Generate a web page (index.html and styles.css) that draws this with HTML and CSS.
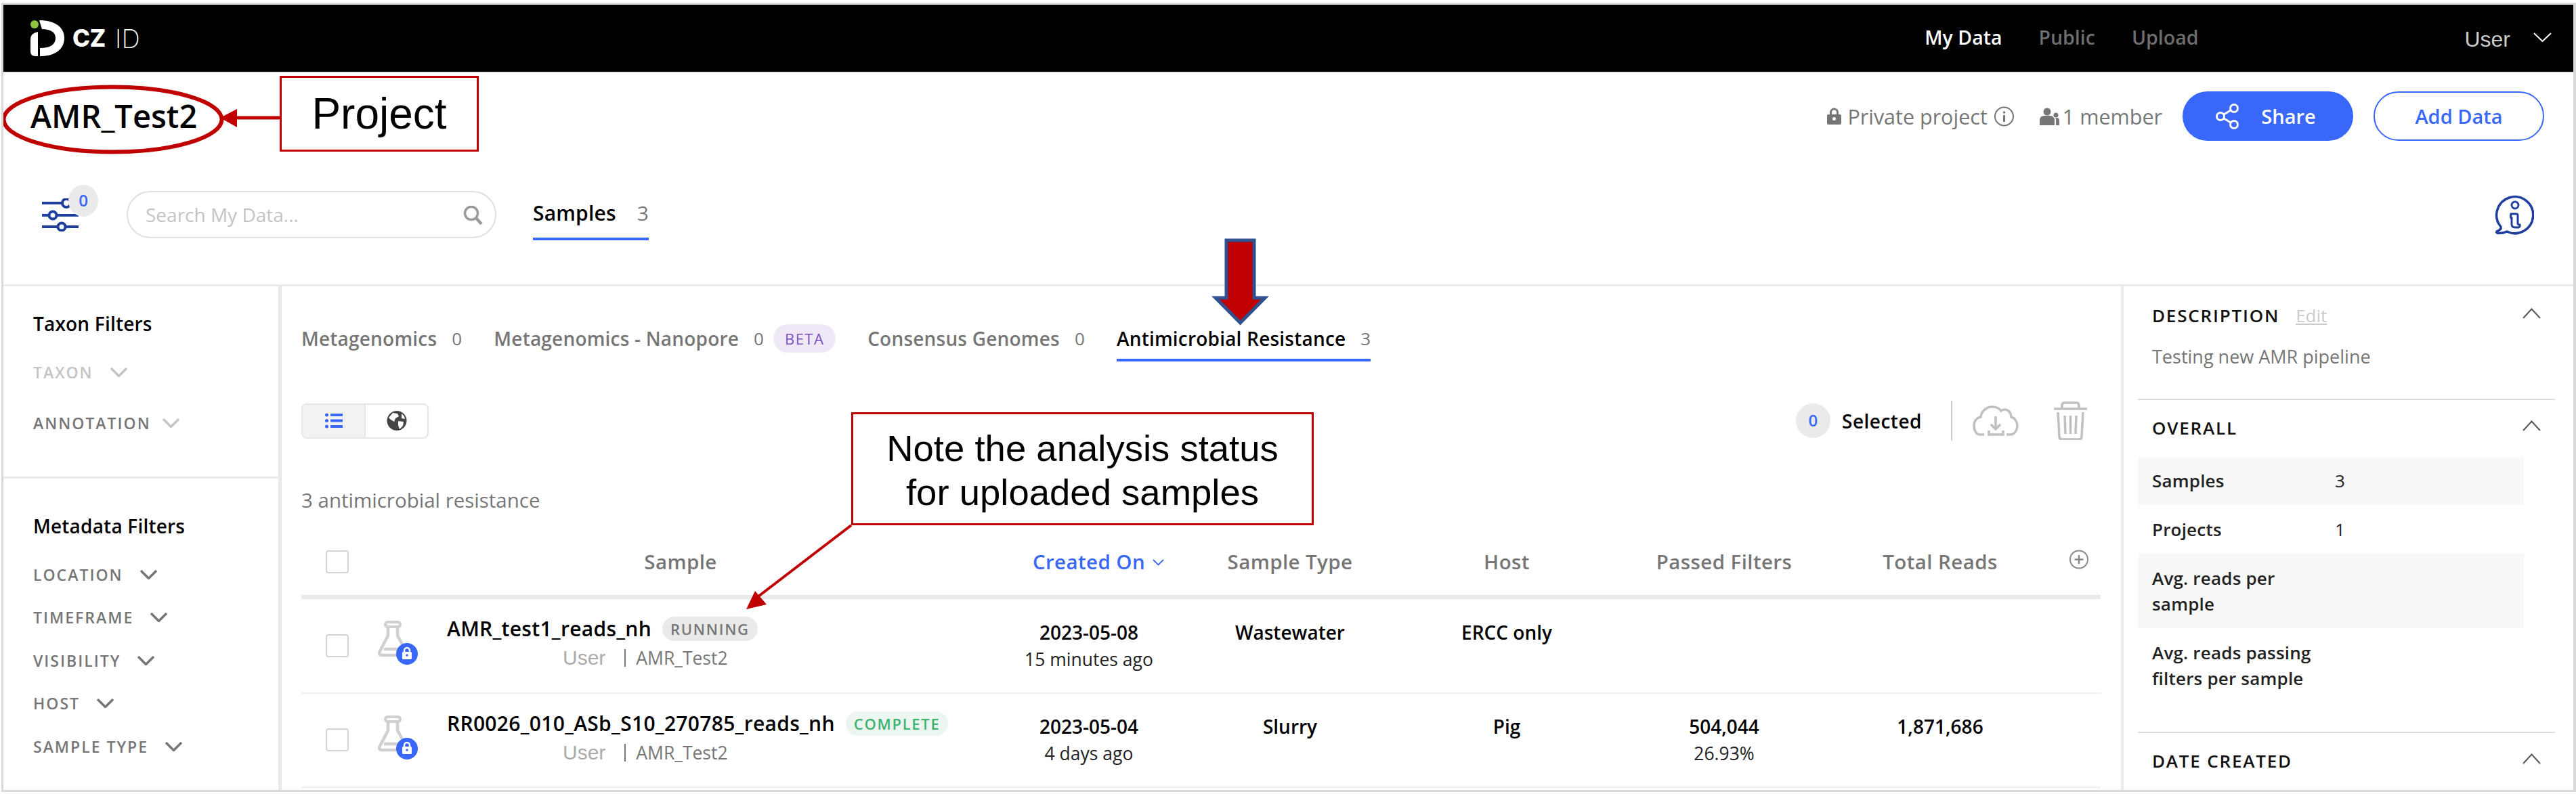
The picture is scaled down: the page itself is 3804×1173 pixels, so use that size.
FILE: index.html
```html
<!DOCTYPE html>
<html lang="en">
<head>
<meta charset="utf-8">
<title>CZ ID - AMR_Test2</title>
<link rel="stylesheet" href="styles.css">
</head>
<body>
<div class="frame">
  <nav class="topnav">
    <div class="logo">
      <svg class="logo-mark" viewBox="0 0 50 53"><circle cx="6" cy="6" r="6" fill="#8dc63f"/><path d="M0 28Q0 19 11 17V53H7Q0 53 0 46zM13 0C36 0 50 10 50 26C50 43 36 53 14 53V41C29 41 37 36 37 26C37 18 30 13 17 13Q15 7 13 0z" fill="#fff"/></svg>
      <span class="logo-cz">CZ</span><span class="logo-id">ID</span>
    </div>
    <div class="navlinks">
      <a class="navlink active">My Data</a>
      <a class="navlink">Public</a>
      <a class="navlink">Upload</a>
    </div>
    <span class="navuser">User</span>
    <svg class="navchev" viewBox="0 0 27 14"><path d="M1 1l12.5 12L26 1" fill="none" stroke="#fff" stroke-width="2"/></svg>
  </nav>

  <header class="projhead">
    <div class="projtop">
      <h1 class="projtitle">AMR_Test2</h1>
      <div class="projmeta">
        <svg class="ic-lock" viewBox="0 0 23 25"><path d="M5 11V7a6.500 6.500 0 0113 0v4h-3V7a3.500 3.500 0 00-7 0v4z" fill="#767676"/><rect x="1" y="10" width="21" height="15" rx="2" fill="#767676"/><circle cx="11.500" cy="16.500" r="2.500" fill="#fff"/></svg>
        <span class="metatext">Private project</span>
        <svg class="ic-info" viewBox="0 0 31 30"><ellipse cx="15.500" cy="15" rx="13.500" ry="13.500" fill="none" stroke="#767676" stroke-width="2"/><circle cx="15.500" cy="9" r="1.800" fill="#767676"/><rect x="14" y="13" width="3" height="10" fill="#767676"/></svg>
        <svg class="ic-users" viewBox="0 0 29 26"><circle cx="11" cy="6" r="5.500" fill="#767676"/><path d="M0 26v-7q0-7 7-7h8q7 0 7 7v7z" fill="#767676"/><circle cx="24" cy="11" r="3.500" fill="#767676"/><path d="M24 26v-8q0-2-1-3h2q4 0 4 4v7z" fill="#767676"/></svg>
        <span class="metatext">1 member</span>
      </div>
      <button class="btn btn-share">
        <svg class="ic-share" viewBox="0 0 35 38"><g fill="none" stroke="#fff" stroke-width="3"><circle cx="27" cy="7" r="5.500"/><circle cx="7" cy="19" r="5.500"/><circle cx="27" cy="31" r="5.500"/><path d="M12 16l10-6M12 22l10 6"/></g></svg>
        Share
      </button>
      <button class="btn btn-add">Add Data</button>
    </div>
    <div class="projbar">
      <div class="filtertoggle">
        <svg class="ic-filter" viewBox="0 0 54 49"><g fill="none" stroke="#1f3f9e" stroke-width="4"><path d="M0 7h29M0 25h11M21 25h33M0 42h24M34 42h20"/><circle cx="36" cy="7" r="6"/><circle cx="16" cy="25" r="5.500"/><circle cx="29" cy="42" r="5.500"/></g></svg>
        <span class="filterbadge">0</span>
      </div>
      <div class="search">
        <span class="search-ph">Search My Data...</span>
        <svg class="ic-search" viewBox="0 0 29 29"><circle cx="12" cy="12" r="9.500" fill="none" stroke="#9b9b9b" stroke-width="3.500"/><path d="M19 19l8 9" stroke="#9b9b9b" stroke-width="4.500" fill="none"/></svg>
      </div>
      <div class="toptab">Samples<span class="toptab-n">3</span></div>
      <svg class="ic-help" viewBox="0 0 58 60"><path d="M18 55A27 27 0 1 0 9 48V51Q6 54 3 55Q2 57 5 57.500Q12 58 18 55z" fill="none" stroke="#1f3f9e" stroke-width="3.500" stroke-linejoin="round"/><circle cx="30" cy="16" r="5" fill="none" stroke="#1f3f9e" stroke-width="3"/><path d="M24 29h8q2 0 2 2v12q0 2 3 2q1 3-2 4h-5q-5 0-5-5V35h-1q-1-3 0-6z" fill="none" stroke="#1f3f9e" stroke-width="3"/></svg>
    </div>
  </header>

  <main class="columns">
    <aside class="filters">
      <section class="fsec fsec-taxon">
        <h3 class="fhead">Taxon Filters</h3>
        <div class="frow frow-first frow-off">TAXON<svg class="fchev" viewBox="0 0 25 14"><path d="M1 1l11.500 11.500L24 1" fill="none" stroke-width="3.500"/></svg></div>
        <div class="frow frow-ann">ANNOTATION<svg class="fchev fchev-off" viewBox="0 0 25 14"><path d="M1 1l11.500 11.500L24 1" fill="none" stroke-width="3.500"/></svg></div>
      </section>
      <section class="fsec fsec-meta">
        <h3 class="fhead">Metadata Filters</h3>
        <div class="frow frow-first">LOCATION<svg class="fchev" viewBox="0 0 25 14"><path d="M1 1l11.500 11.500L24 1" fill="none" stroke-width="3.500"/></svg></div>
        <div class="frow">TIMEFRAME<svg class="fchev" viewBox="0 0 25 14"><path d="M1 1l11.500 11.500L24 1" fill="none" stroke-width="3.500"/></svg></div>
        <div class="frow">VISIBILITY<svg class="fchev" viewBox="0 0 25 14"><path d="M1 1l11.500 11.500L24 1" fill="none" stroke-width="3.500"/></svg></div>
        <div class="frow">HOST<svg class="fchev" viewBox="0 0 25 14"><path d="M1 1l11.500 11.500L24 1" fill="none" stroke-width="3.500"/></svg></div>
        <div class="frow">SAMPLE TYPE<svg class="fchev" viewBox="0 0 25 14"><path d="M1 1l11.500 11.500L24 1" fill="none" stroke-width="3.500"/></svg></div>
      </section>
    </aside>

    <section class="content">
      <div class="tabs">
        <div class="tab">Metagenomics<span class="tab-n">0</span></div>
        <div class="tab">Metagenomics - Nanopore<span class="tab-n">0</span><span class="beta">BETA</span></div>
        <div class="tab">Consensus Genomes<span class="tab-n">0</span></div>
        <div class="tab tab-active">Antimicrobial Resistance<span class="tab-n">3</span></div>
      </div>

      <div class="toolbar">
        <div class="viewtoggle">
          <div class="vt vt-on">
            <svg class="ic-list" viewBox="0 0 26 23"><g fill="#3867fa"><circle cx="2.500" cy="3" r="2.500"/><circle cx="2.500" cy="11.500" r="2.500"/><circle cx="2.500" cy="20" r="2.500"/><rect x="8" y="1" width="18" height="4"/><rect x="8" y="9.500" width="18" height="4"/><rect x="8" y="18" width="18" height="4"/></g></svg>
          </div>
          <div class="vt">
            <svg class="ic-globe" viewBox="0 0 30 29"><circle cx="15" cy="14.500" r="14.500" fill="#444"/><path d="M9 3l7 1 2 4-5 3-2 5-5-3-3-3zM17 15l8 1-1 6-5 5-2-6zM22 4l4 4 1 4-5-1z" fill="#fff"/></svg>
          </div>
        </div>
        <div class="selected">
          <span class="selcount">0</span>
          <span class="seltext">Selected</span>
          <span class="selsep"></span>
          <svg class="ic-cloud" viewBox="0 0 68 46"><g fill="none" stroke="#c0c0c0" stroke-width="3.500"><path d="M17 43H10C5 43 2 36 2 30C2 22 7 18 12 17C13 7 22 2 29 2C35 2 39 4 42 8C47 4 56 6 57 17C62 18 66 24 66 30C66 36 62 43 56 43H50"/><path d="M34 16V35M27 28l7 7 7-7M24 37v6h21v-6"/></g></svg>
          <svg class="ic-trash" viewBox="0 0 49 57"><g fill="none" stroke="#c0c0c0" stroke-width="3.500"><path d="M0 11h49M12 10V6q0-4 4-4h17q4 0 4 4v4M6 16l2 36q0 4 4 4h25q4 0 4-4l2-36M16 21l1 27M24.500 21v27M33 21l-1 27"/></g></svg>
        </div>
      </div>

      <div class="count">3 antimicrobial resistance</div>

      <div class="trow thead">
        <div class="tcell-check"><span class="checkbox"></span></div>
        <div class="th">Sample</div>
        <div class="th th-sort">Created On<svg class="sortchev" viewBox="0 0 17 10"><path d="M1 1l7.500 7.500L16 1" fill="none" stroke="#3867fa" stroke-width="1.800"/></svg></div>
        <div class="th">Sample Type</div>
        <div class="th">Host</div>
        <div class="th">Passed Filters</div>
        <div class="th">Total Reads</div>
        <div class="th th-plus"><svg class="ic-plus" viewBox="0 0 30 29"><circle cx="15" cy="14.500" r="13" fill="none" stroke="#8a8a8a" stroke-width="2"/><path d="M15 8v13M8.500 14.500h13" stroke="#8a8a8a" stroke-width="2.500"/></svg></div>
      </div>

      <div class="trow tr">
        <div class="tcell-check"><span class="checkbox"></span></div>
        <div class="samplecell">
          <div class="flaskwrap">
            <svg class="ic-flask" viewBox="0 0 59 65"><rect x="11" y="2" width="22" height="7" rx="3.500" fill="none" stroke="#d0d0d0" stroke-width="4"/><path d="M15 9V22L3 45Q0 51 7 51H34M29 9V22L40 42M9 42H36" fill="none" stroke="#d0d0d0" stroke-width="4.500"/><circle cx="43" cy="49" r="16" fill="#3867fa"/><path d="M39 47v-3a4 4 0 018 0v3" fill="none" stroke="#fff" stroke-width="2.500"/><rect x="36" y="46" width="14" height="11" rx="1.500" fill="#fff"/><circle cx="43" cy="51" r="1.800" fill="#3867fa"/></svg>
          </div>
          <div class="sampletext">
            <div class="samplename">AMR_test1_reads_nh<span class="pill pill-run">RUNNING</span></div>
            <div class="samplemeta"><span class="metauser">User</span><span class="metabar"></span><span class="metaproj">AMR_Test2</span></div>
          </div>
        </div>
        <div class="td"><strong>2023-05-08</strong><span>15 minutes ago</span></div>
        <div class="td"><strong>Wastewater</strong><span>&nbsp;</span></div>
        <div class="td"><strong>ERCC only</strong><span>&nbsp;</span></div>
        <div class="td"></div>
        <div class="td"></div>
        <div class="td"></div>
      </div>

      <div class="trow tr">
        <div class="tcell-check"><span class="checkbox"></span></div>
        <div class="samplecell">
          <div class="flaskwrap">
            <svg class="ic-flask" viewBox="0 0 59 65"><rect x="11" y="2" width="22" height="7" rx="3.500" fill="none" stroke="#d0d0d0" stroke-width="4"/><path d="M15 9V22L3 45Q0 51 7 51H34M29 9V22L40 42M9 42H36" fill="none" stroke="#d0d0d0" stroke-width="4.500"/><circle cx="43" cy="49" r="16" fill="#3867fa"/><path d="M39 47v-3a4 4 0 018 0v3" fill="none" stroke="#fff" stroke-width="2.500"/><rect x="36" y="46" width="14" height="11" rx="1.500" fill="#fff"/><circle cx="43" cy="51" r="1.800" fill="#3867fa"/></svg>
          </div>
          <div class="sampletext">
            <div class="samplename">RR0026_010_ASb_S10_270785_reads_nh<span class="pill pill-done">COMPLETE</span></div>
            <div class="samplemeta"><span class="metauser">User</span><span class="metabar"></span><span class="metaproj">AMR_Test2</span></div>
          </div>
        </div>
        <div class="td"><strong>2023-05-04</strong><span>4 days ago</span></div>
        <div class="td"><strong>Slurry</strong><span>&nbsp;</span></div>
        <div class="td"><strong>Pig</strong><span>&nbsp;</span></div>
        <div class="td"><strong>504,044</strong><span>26.93%</span></div>
        <div class="td"><strong>1,871,686</strong><span>&nbsp;</span></div>
        <div class="td"></div>
      </div>
    </section>

    <aside class="details">
      <section class="dsec dsec-desc">
        <div class="dhead"><h4 class="dtitle">DESCRIPTION</h4><a class="dedit">Edit</a><svg class="dchev" viewBox="0 0 27 16"><path d="M1 15L13.500 1.500 26 15" fill="none" stroke="#555" stroke-width="2"/></svg></div>
        <p class="dtext">Testing new AMR pipeline</p>
      </section>
      <section class="dsec dsec-over">
        <div class="dhead"><h4 class="dtitle">OVERALL</h4><svg class="dchev" viewBox="0 0 27 16"><path d="M1 15L13.500 1.500 26 15" fill="none" stroke="#555" stroke-width="2"/></svg></div>
        <div class="dtable">
          <div class="drow drow-a drow-1"><span class="dlabel">Samples</span><span class="dval">3</span></div>
          <div class="drow drow-2"><span class="dlabel">Projects</span><span class="dval">1</span></div>
          <div class="drow drow-a drow-3"><span class="dlabel">Avg. reads per sample</span><span class="dval"></span></div>
          <div class="drow drow-3"><span class="dlabel">Avg. reads passing filters per sample</span><span class="dval"></span></div>
        </div>
      </section>
      <section class="dsec dsec-date">
        <div class="dhead"><h4 class="dtitle">DATE CREATED</h4><svg class="dchev" viewBox="0 0 27 16"><path d="M1 15L13.500 1.500 26 15" fill="none" stroke="#555" stroke-width="2"/></svg></div>
      </section>
    </aside>
  </main>

  <svg class="marks" viewBox="0 0 3804 1173" width="3804" height="1173">
    <ellipse cx="166.500" cy="176.500" rx="161" ry="48" fill="none" stroke="#c00000" stroke-width="6"/>
    <path d="M413 174H345" stroke="#c00000" stroke-width="5" fill="none"/>
    <path d="M325 174L350 161V188z" fill="#c00000"/>
    <path d="M1257 776L1116 884" stroke="#c00000" stroke-width="4" fill="none"/>
    <path d="M1102 900L1115 873L1132 893z" fill="#c00000"/>
    <path d="M1811 355H1852V440H1868L1831.500 477L1795 440H1811z" fill="#c00000" stroke="#2f528f" stroke-width="5"/>
  </svg>
  <div class="callout callout-project">Project</div>
  <div class="callout callout-note">Note the analysis status<br>for uploaded samples</div>
</div>
</body>
</html>
```
FILE: styles.css
```css
* { box-sizing: border-box; }
html, body { margin: 0; padding: 0; background: #fff; }
body { width: 3804px; height: 1173px; overflow: hidden; font-family: "Open Sans", "Liberation Sans", sans-serif; color: #000; }
svg { display: block; flex: none; }
h1, h3, h4, p { margin: 0; }

.frame { position: relative; margin: 4px 0 0 2px; width: 3802px; height: 1166px; border: solid #d9d9d9; border-width: 3px 4px 3px 3px; overflow: hidden; }

/* top nav */
.topnav { height: 100px; background: #000; display: flex; align-items: center; padding: 0 32px 0 40px; border-bottom: 1px solid #ccc; }
.logo { display: flex; align-items: center; color: #fff; }
.logo-mark { width: 50px; height: 53px; margin-right: 12px; }
.logo-cz { font: 800 35px/1 "Inter", sans-serif; letter-spacing: -.5px; }
.logo-id { font: 200 38px/1 "Inter", sans-serif; margin-left: 14px; }
.navlinks { margin-left: auto; display: flex; gap: 54px; margin-bottom: 4px; }
.navlink { font-size: 28.500px; font-weight: 600; color: #6e6e6e; line-height: 40px; }
.navlink.active { color: #fff; }
.navuser { margin-left: 393px; font: 32px/40px "Liberation Sans", sans-serif; color: #ccc; margin-top: 3px; }
.navchev { width: 27px; height: 14px; margin-left: 34px; margin-bottom: 4px; }

/* project header */
.projhead { height: 316px; border-bottom: 3px solid #eaeaea; }
.projtop { display: flex; align-items: center; padding: 28px 43px 0 40px; }
.projtitle { font: 600 47px/73px "Open Sans", sans-serif; margin-right: auto; }
.projmeta { display: flex; align-items: center; color: #767676; }
.metatext { font-size: 30.500px; line-height: 40px; }
.ic-lock { width: 23px; height: 25px; margin-right: 8px; }
.ic-info { width: 31px; height: 30px; margin: 0 37px 0 9px; }
.ic-users { width: 29px; height: 26px; margin-right: 5px; }
.btn { height: 73px; width: 252px; border-radius: 37px; font: 600 29px/1 "Open Sans", sans-serif; display: flex; align-items: center; justify-content: center; padding: 0; }
.btn-share { background: #3867fa; border: 0; color: #fff; margin-left: 30px; gap: 32px; padding-right: 6px; }
.btn-add { background: #fff; border: 2px solid #3867fa; color: #3867fa; margin-left: 30px; }
.ic-share { width: 35px; height: 38px; }

.projbar { display: flex; align-items: center; height: 70px; margin-top: 74px; padding: 0 58px 0 57px; }
.filtertoggle { position: relative; width: 54px; height: 49px; }
.ic-filter { width: 54px; height: 49px; }
.filterbadge { position: absolute; left: 39px; top: -20px; width: 44px; height: 47px; border-radius: 50%; background: #eaeaea; color: #3867fa; font-weight: 600; font-size: 24px; line-height: 46px; text-align: center; }
.search { margin-left: 71px; width: 546px; height: 70px; border: 2px solid #e0e0e0; border-radius: 35px; display: flex; align-items: center; justify-content: space-between; padding: 0 18px 0 26px; }
.search-ph { font-size: 28px; color: #c4c4c4; }
.ic-search { width: 29px; height: 29px; }
.toptab { margin-left: 54px; align-self: flex-start; margin-top: 13px; font-size: 30px; font-weight: 600; line-height: 40px; padding-bottom: 16px; border-bottom: 4px solid #3867fa; letter-spacing: .2px; }
.toptab-n { margin-left: 31px; font-weight: 400; color: #767676; }
.ic-help { width: 58px; height: 60px; margin-left: auto; }

/* columns */
.columns { display: grid; grid-template-columns: 406px 2721px 1fr; height: 744px; }

/* left filters */
.filters { border-right: 5px solid #eaeaea; width: 411px; }
.fsec { padding-left: 44px; }
.fsec-taxon { height: 284px; padding-top: 35px; border-bottom: 3px solid #eaeaea; }
.fsec-meta { padding-top: 50px; }
.fhead { font-size: 28px; font-weight: 600; line-height: 40px; letter-spacing: .2px; }
.frow { height: 63.500px; display: flex; align-items: center; font-size: 23px; font-weight: 600; letter-spacing: 2px; color: #767676; }
.frow-first { margin-top: 20px; }
.frow-ann { margin-top: 12px; }
.frow-off { color: #c4c4c4; }
.fchev { width: 25px; height: 14px; margin-left: 25px; stroke: #767676; }
.frow-off .fchev { stroke: #c4c4c4; }
.fchev-off { stroke: #c4c4c4; margin-left: 17px; }

/* content */
.content { padding: 0 30px 0 34px; grid-column: 2; }
.tabs { display: flex; height: 111px; }
.tab { display: flex; align-items: center; align-self: flex-start; margin-top: 57px; height: 54px; padding-bottom: 14px; font-size: 28px; font-weight: 600; letter-spacing: .2px; line-height: 40px; color: #767676; margin-right: 47px; }
.tab-active { color: #000; border-bottom: 4px solid #3867fa; padding-bottom: 10px; margin-right: 0; }
.tab-n { margin-left: 22px; font-weight: 400; font-size: 26px; color: #767676; }
.beta { margin-left: 14px; width: 92px; height: 42px; border-radius: 21px; background: #efe9f7; color: #7a4fc4; font-size: 22px; font-weight: 400; letter-spacing: 1.500px; line-height: 42px; text-align: center; }

.toolbar { display: flex; align-items: center; justify-content: space-between; height: 59px; margin-top: 58px; }
.viewtoggle { display: flex; width: 188px; height: 52px; border: 2px solid #e6e6e6; border-radius: 8px; overflow: hidden; }
.vt { flex: 1; display: flex; align-items: center; justify-content: center; }
.vt-on { background: #f2f2f2; border-right: 2px solid #e6e6e6; }
.ic-list { width: 26px; height: 23px; }
.ic-globe { width: 30px; height: 29px; }
.selected { display: flex; align-items: center; padding-right: 20px; }
.selcount { width: 51px; height: 51px; border-radius: 50%; background: #eaeaea; color: #3867fa; font-size: 24px; font-weight: 600; line-height: 50px; text-align: center; }
.seltext { margin-left: 17px; font-size: 28px; font-weight: 600; letter-spacing: .5px; line-height: 40px; }
.selsep { width: 2px; height: 59px; margin-left: 43px; background: #ccc; }
.ic-cloud { width: 68px; height: 46px; margin-left: 30px; }
.ic-trash { width: 49px; height: 57px; margin-left: 52px; }

.count { margin-top: 68px; font-size: 29.500px; line-height: 40px; color: #767676; }

.trow { display: grid; grid-template-columns: 99px 922px 284px 310px 330px 312px 326px 73px; }
.thead { margin-top: 53px; height: 73px; padding-bottom: 31px; border-bottom: 6px solid #eaeaea; align-items: center; }
.tcell-check { padding-left: 36px; display: flex; align-items: center; }
.checkbox { display: block; width: 34px; height: 34px; border: 2px solid #d4d4d4; border-radius: 4px; }
.th { font-size: 29.500px; font-weight: 600; letter-spacing: .4px; color: #767676; text-align: center; line-height: 36px; }
.th-sort { color: #3867fa; display: flex; justify-content: center; align-items: center; padding-left: 28px; }
.sortchev { width: 17px; height: 10px; margin-left: 11px; margin-top: 2px; }
.th-plus { display: flex; justify-content: center; padding-left: 10px; margin-top: -7px; }
.ic-plus { width: 30px; height: 29px; }

.tr { height: 139.500px; border-bottom: 2px solid #eeeeee; align-items: center; }
.samplecell { display: flex; align-items: center; padding-left: 14px; height: 100%; }
.flaskwrap { width: 102px; margin-bottom: 8px; }
.ic-flask { width: 59px; height: 65px; }
.sampletext { align-self: flex-start; padding-top: 24px; }
.samplename { display: flex; align-items: center; font-size: 30px; font-weight: 600; line-height: 40px; letter-spacing: .3px; }
.samplemeta { display: flex; align-items: center; padding-left: 171px; margin-top: 3px; height: 40px; }
.metauser { font: 30px/40px "Liberation Sans", sans-serif; color: #ababab; }
.metabar { width: 2px; height: 26px; background: #767676; margin: 0 15px 0 28px; }
.metaproj { font-size: 26.500px; color: #767676; }
.pill { margin-left: 16px; height: 36px; border-radius: 18px; font-size: 22px; font-weight: 600; letter-spacing: 1.700px; line-height: 36px; padding: 0 12px; }
.pill-run { background: #eaeaea; color: #767676; }
.pill-done { background: #ecf5f0; color: #3cb371; }
.td { display: flex; flex-direction: column; align-items: center; line-height: 40px; }
.td strong { font-size: 28px; font-weight: 600; }
.td span { font-size: 26.500px; color: #222; }

/* right details */
.details { border-left: 4px solid #eaeaea; padding: 0 27px 0 21px; grid-column: 3; overflow: hidden; }
.dsec { border-bottom: 2px solid #dcdcdc; }
.dhead { display: flex; align-items: center; height: 40px; padding-left: 21px; }
.dtitle { font-size: 26px; font-weight: 600; letter-spacing: 1.800px; color: #111; line-height: 40px; }
.dedit { margin-left: 24px; font-size: 26px; color: #ccc; text-decoration: underline; }
.dchev { width: 27px; height: 16px; margin-left: auto; margin-right: 21px; margin-top: -6px; }
.dsec-desc { height: 168px; padding-top: 23px; }
.dtext { margin: 21px 0 0 21px; font-size: 27px; line-height: 40px; color: #767676; }
.dsec-over { height: 492px; padding-top: 21px; }
.dtable { width: 570px; margin-top: 23px; }
.drow { display: grid; grid-template-columns: 270px 1fr; align-items: center; padding-left: 21px; font-size: 26px; font-weight: 600; letter-spacing: .2px; color: #222; line-height: 38.500px; }
.dlabel { width: 250px; }
.dval { font-weight: 400; }
.drow-a { background: #f8f8f8; }
.drow-1 { height: 71px; }
.drow-2 { height: 72px; }
.drow-3 { height: 110px; }
.dsec-date { padding-top: 21px; border-bottom: 0; }

/* annotations */
.marks { position: absolute; left: -5px; top: -7px; pointer-events: none; }
.callout { position: absolute; background: #fff; border: 3px solid #c00000; font-family: "Liberation Sans", sans-serif; color: #000; text-align: center; display: flex; align-items: center; justify-content: center; }
.callout-project { left: 408px; top: 105px; width: 294px; height: 112px; font-size: 64px; }
.callout-note { left: 1252px; top: 602px; width: 683px; height: 167px; font-size: 54.500px; line-height: 65px; padding-top: 4px; }
```
